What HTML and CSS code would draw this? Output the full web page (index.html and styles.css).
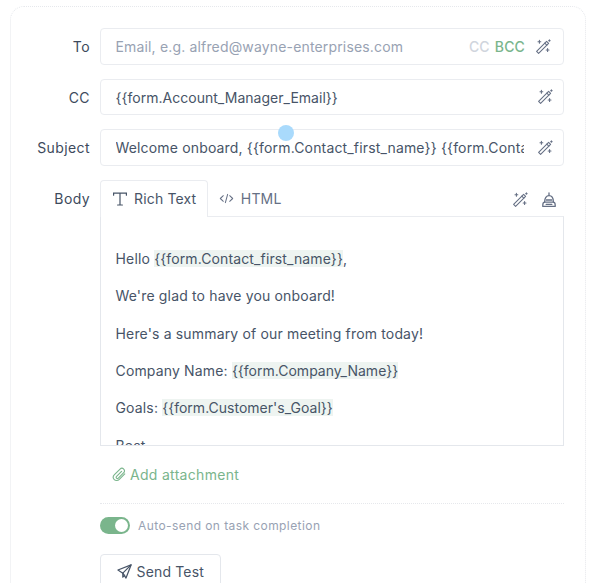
FILE: index.html
```html
<!DOCTYPE html>
<html lang="en">
<head>
<meta charset="utf-8">
<title>Email form</title>
<link rel="stylesheet" href="styles.css">
</head>
<body>
<svg class="defs" width="0" height="0" aria-hidden="true">
  <symbol id="wand" viewBox="0 0 16 16">
    <g fill="none" stroke="currentColor" stroke-width="1.1" stroke-linejoin="round" stroke-linecap="round">
      <path d="M1.6 12.4 11.6 2.4 13.6 4.4 3.6 14.4Z"/>
      <path d="M9.8 4.2 11.8 6.2"/>
      <path d="M4.4 1.4V4.2M3 2.8H5.8"/>
      <path d="M12.6 9.6V12.4M11.2 11H14"/>
      <path d="M14.4.9V2.3M13.7 1.6H15.1"/>
    </g>
  </symbol>
</svg>
<main class="card">
  <span class="cursor-dot"></span>
  <div class="row">
    <label class="label">To</label>
    <div class="field">
      <span class="value placeholder">Email, e.g. alfred@wayne-enterprises.com</span>
      <span class="cc">CC</span><span class="bcc">BCC</span>
      <svg class="icon wand-to"><use href="#wand"/></svg>
    </div>
  </div>
  <div class="row">
    <label class="label">CC</label>
    <div class="field">
      <span class="value merge">{{form.Account_Manager_Email}}</span>
      <svg class="icon"><use href="#wand"/></svg>
    </div>
  </div>
  <div class="row">
    <label class="label">Subject</label>
    <div class="field">
      <span class="value">Welcome onboard, {{form.Contact_first_name}} {{form.Contact_last_name}}</span>
      <svg class="icon"><use href="#wand"/></svg>
    </div>
  </div>
  <div class="row">
    <label class="label">Body</label>
    <div class="body-col">
      <div class="tabs">
        <div class="tab active">
          <svg class="tab-icon" viewBox="0 0 16 16" fill="none" stroke="currentColor" stroke-width="1.2" stroke-linecap="round"><path d="M1.6 4.2V2.2H14.4V4.2M8 2.2V14M5.6 14H10.4"/></svg>
          Rich Text
        </div>
        <div class="tab">
          <svg class="code-icon" viewBox="0 0 16 16" fill="none" stroke="currentColor" stroke-width="1.1" stroke-linecap="round" stroke-linejoin="round"><path d="M4.6 5 1.4 8 4.6 11M11.4 5 14.6 8 11.4 11M9.2 3.6 6.8 12.4"/></svg>
          HTML
        </div>
        <div class="tab-tools">
          <svg class="icon"><use href="#wand"/></svg>
          <svg class="icon" viewBox="0 0 16 16" fill="none" stroke="currentColor" stroke-width="1.3" stroke-linejoin="round" stroke-linecap="round"><path d="M8 1V3.2"/><path d="M3.6 10C3.6 6.2 5.4 3.6 8 3.6S12.4 6.2 12.4 10"/><path d="M1.8 13C1.8 11.2 2.6 10.2 4 10.2H12C13.4 10.2 14.2 11.2 14.2 13V14.4H1.8Z"/><path d="M5.2 8H10.8M5.2 12.4H10.8"/></svg>
        </div>
      </div>
      <div class="editor">
        <p>Hello <span class="tag tag-long">{{form.Contact_first_name}}</span>,</p>
        <p>We're glad to have you onboard!</p>
        <p>Here's a summary of our meeting from today!</p>
        <p>Company Name: <span class="tag">{{form.Company_Name}}</span></p>
        <p>Goals: <span class="tag">{{form.Customer's_Goal}}</span></p>
        <p>Best,</p>
      </div>
      <div class="attach">
        <svg class="clip" viewBox="0 0 16 16" fill="none" stroke="currentColor" stroke-width="1.2" stroke-linecap="round" stroke-linejoin="round"><path d="M13.6 7.4 7.8 13.2C6.2 14.8 3.8 14.8 2.4 13.4S1 9.8 2.6 8.2L8.6 2.2C9.7 1.1 11.4 1.1 12.5 2.2S13.6 5 12.5 6.1L6.8 11.8C6.2 12.4 5.3 12.4 4.8 11.9S4.3 10.6 4.9 10L10.2 4.7"/></svg>
        Add attachment
      </div>
      <hr class="divider">
      <div class="auto-send">
        <span class="switch"><span class="knob"></span></span>
        <span>Auto-send on task completion</span>
      </div>
      <button class="send" type="button">
        <svg class="plane" viewBox="0 0 16 16" fill="none" stroke="currentColor" stroke-width="1.3" stroke-linejoin="round" stroke-linecap="round"><path d="M15 1 1 6.4 6.2 9.8 9.6 15Z"/><path d="M6.2 9.8 15 1"/><path d="M6.2 9.8V14L8.2 12"/></svg>
        Send Test
      </button>
    </div>
  </div>
</main>
</body>
</html>
```
FILE: styles.css
```css
* { box-sizing: border-box; }
html, body { margin: 0; height: 583px; overflow: hidden; background: #fff; }
body {
  font-family: Inter, "Liberation Sans", sans-serif;
  font-size: 14px;
  letter-spacing: 0.16px;
  color: #475467;
  padding: 6px 16px 0 10px;
}
.defs { position: absolute; }
.card {
  position: relative;
  height: 640px;
  border: 1px dotted #e6e8ec;
  border-radius: 14px;
  padding: 21.25px 21px 0 0;
  display: flex;
  flex-direction: column;
  gap: 14px;
}
.cursor-dot {
  position: absolute;
  left: 267px;
  top: 118px;
  width: 16px;
  height: 16px;
  border-radius: 50%;
  background: #a9dafc;
}
.row { display: flex; align-items: flex-start; }
.label {
  width: 79px;
  height: 36.5px;
  flex: none;
  text-align: right;
  margin-right: 10px;
  line-height: 37.5px;
  font-weight: 400;
  letter-spacing: 0.4px;
  color: #3d4a5c;
}
.field {
  flex: 1;
  min-width: 0;
  height: 36.5px;
  border: 1px solid #eaecf0;
  border-radius: 4px;
  display: flex;
  align-items: center;
  padding: 0 10px 0 14.5px;
  background: #fff;
}
.value { flex: 1; min-width: 0; white-space: nowrap; overflow: hidden; margin-right: 13px; }
.merge { letter-spacing: 0.02px; }
.placeholder { color: #98a2b3; }
.cc { color: #d0d5dd; font-weight: 500; margin-right: 5px; }
.bcc { color: #7ab58c; font-weight: 500; margin-right: 10px; }
.icon { width: 16px; height: 16px; color: #667085; flex: none; display: block; }
.wand-to { margin-right: 2px; }
.body-col { flex: 1; min-width: 0; }
.tabs { display: flex; height: 36px; align-items: stretch; position: relative; }
.tab {
  display: flex;
  align-items: center;
  gap: 7px;
  padding: 0 10px;
  color: #667085;
  border: 1px solid transparent;
  border-bottom: 0;
}
.tab.active {
  color: #475467;
  padding: 0 10.5px 0 11px;
  border-color: #eaecf0;
  border-radius: 4px 4px 0 0;
  background: #fff;
  margin-bottom: -1px;
  position: relative;
  z-index: 1;
  gap: 6px;
}
.tab-icon { width: 16px; height: 16px; }
.code-icon { width: 15px; height: 15px; }
.tab-tools { margin-left: auto; display: flex; align-items: center; gap: 13px; padding: 4px 7px 0 0; }
.editor {
  height: 230px;
  overflow: hidden;
  border: 1px solid #e4e7ec;
  border-top-color: #eaecf0;
  padding: 33.3px 14.5px 0;
}
.editor p { margin: 0 0 19px; line-height: 18.33px; }
.tag { background: #eef4f1; letter-spacing: 0.01px; }
.tag-long { letter-spacing: 0.12px; }
.attach {
  display: flex;
  align-items: center;
  gap: 3px;
  padding: 0 0 0 12px;
  margin-top: 20px;
  line-height: 18px;
  letter-spacing: 0.3px;
  color: #7ab58c;
}
.clip { width: 15px; height: 15px; }
.divider { border: 0; border-top: 1px dotted #e6e8ec; margin: 19.5px 0 13px; }
.auto-send {
  display: flex;
  align-items: center;
  gap: 8px;
  font-size: 12px;
  letter-spacing: 0.42px;
  font-weight: 400;
  color: #98a2b3;
}
.switch {
  width: 30px;
  height: 17px;
  border-radius: 9px;
  background: #7ab58c;
  display: flex;
  align-items: center;
  justify-content: flex-end;
  padding: 2px;
}
.knob { width: 13px; height: 13px; border-radius: 50%; background: #fff; }
.send {
  margin-top: 20px;
  height: 36px;
  border: 1px solid #e4e7ec;
  border-radius: 4px;
  background: #fff;
  font: inherit;
  letter-spacing: inherit;
  line-height: 16px;
  color: #475467;
  display: flex;
  align-items: center;
  gap: 5px;
  padding: 0 16.5px 1px 15.5px;
}
.plane { width: 15px; height: 15px; }
```
